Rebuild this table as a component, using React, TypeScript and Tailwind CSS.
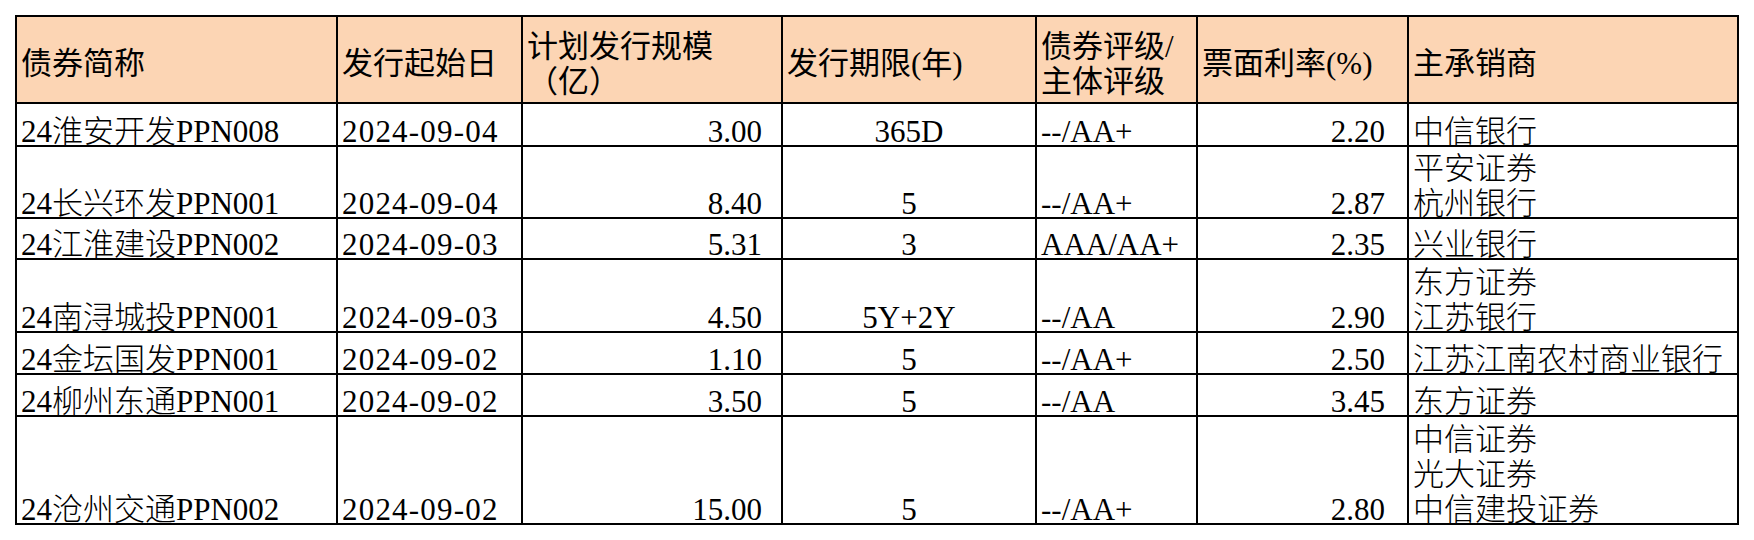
import React from "react";

type Row = {
  name: string;
  date: string;
  size: string;
  term: string;
  rating: string;
  rate: string;
  under: string[];
  h: string;
};

const rows: Row[] = [
  { name: "24淮安开发PPN008", date: "2024-09-04", size: "3.00", term: "365D", rating: "--/AA+", rate: "2.20", under: ["中信银行"], h: "h-[43px]" },
  { name: "24长兴环发PPN001", date: "2024-09-04", size: "8.40", term: "5", rating: "--/AA+", rate: "2.87", under: ["平安证券", "杭州银行"], h: "h-[72px]" },
  { name: "24江淮建设PPN002", date: "2024-09-03", size: "5.31", term: "3", rating: "AAA/AA+", rate: "2.35", under: ["兴业银行"], h: "h-[41px]" },
  { name: "24南浔城投PPN001", date: "2024-09-03", size: "4.50", term: "5Y+2Y", rating: "--/AA", rate: "2.90", under: ["东方证券", "江苏银行"], h: "h-[73px]" },
  { name: "24金坛国发PPN001", date: "2024-09-02", size: "1.10", term: "5", rating: "--/AA+", rate: "2.50", under: ["江苏江南农村商业银行"], h: "h-[42px]" },
  { name: "24柳州东通PPN001", date: "2024-09-02", size: "3.50", term: "5", rating: "--/AA", rate: "3.45", under: ["东方证券"], h: "h-[42px]" },
  { name: "24沧州交通PPN002", date: "2024-09-02", size: "15.00", term: "5", rating: "--/AA+", rate: "2.80", under: ["中信证券", "光大证券", "中信建投证券"], h: "h-[108px]" },
];

// header cells: centred vertically, a little low like the sheet
const th = "border-r-2 border-b-2 border-t-2 border-black bg-[#fcd5b4] pl-[4px] pr-[4px] pt-[8px] text-left align-middle font-normal";
// body cells: text sits on the bottom line
const td = "border-r-2 border-b-2 border-black px-[4px] align-bottom whitespace-nowrap";

function Bottom({ children, className = "" }: { children: React.ReactNode; className?: string }) {
  return <div className={`mb-[-4px] ${className}`}>{children}</div>;
}

export default function App() {
  return (
    <div className="min-h-screen bg-white pl-[15px] pt-[15px]">
      <table
        className="table-fixed w-[1724px] border-separate border-spacing-0 text-[31px] leading-[35px] text-black font-light"
        style={{ fontFamily: '"Liberation Serif", "Noto Sans CJK SC", serif' }}
      >
        <colgroup>
          <col className="w-[323px]" />
          <col className="w-[185px]" />
          <col className="w-[260px]" />
          <col className="w-[254px]" />
          <col className="w-[161px]" />
          <col className="w-[211px]" />
          <col className="w-[330px]" />
        </colgroup>
        <thead>
          <tr className="h-[89px]">
            <th className={`${th} border-l-2`}>债券简称</th>
            <th className={th}>发行起始日</th>
            <th className={th}>
              计划发行规模
              <br />
              （亿）
            </th>
            <th className={th}>发行期限(年)</th>
            <th className={th}>
              债券评级/
              <br />
              主体评级
            </th>
            <th className={th}>票面利率(%)</th>
            <th className={th}>主承销商</th>
          </tr>
        </thead>
        <tbody>
          {rows.map((r) => (
            <tr key={r.name} className={r.h}>
              <td className={`${td} border-l-2`}>
                <Bottom>{r.name}</Bottom>
              </td>
              <td className={td}>
                <Bottom className="tracking-[1.2px]">{r.date}</Bottom>
              </td>
              <td className={`${td} pr-[19px] text-right`}>
                <Bottom>{r.size}</Bottom>
              </td>
              <td className={`${td} text-center`}>
                <Bottom>{r.term}</Bottom>
              </td>
              <td className={td}>
                <Bottom>{r.rating}</Bottom>
              </td>
              <td className={`${td} pr-[22px] text-right`}>
                <Bottom>{r.rate}</Bottom>
              </td>
              <td className={td}>
                <Bottom>
                  {r.under.map((u) => (
                    <div key={u}>{u}</div>
                  ))}
                </Bottom>
              </td>
            </tr>
          ))}
        </tbody>
      </table>
    </div>
  );
}
